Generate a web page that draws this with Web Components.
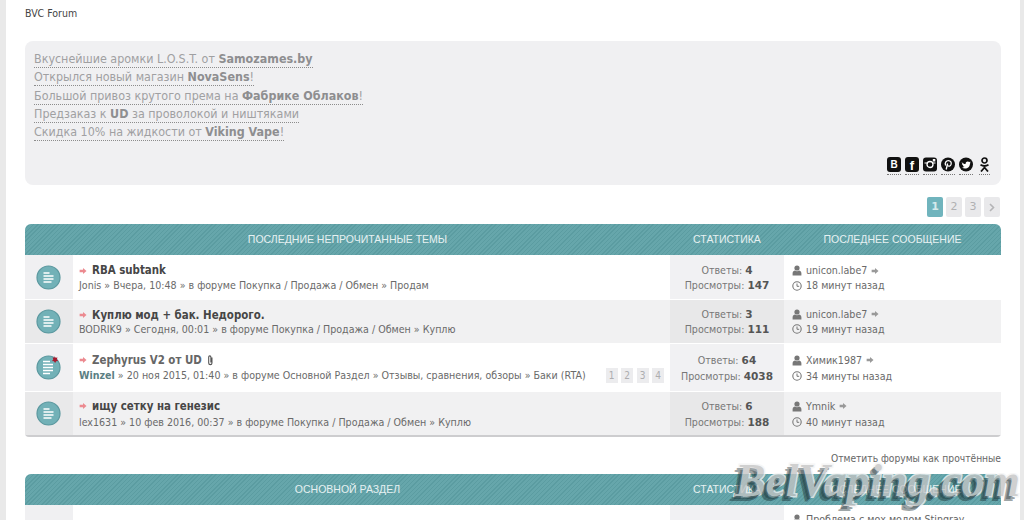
<!DOCTYPE html>
<html lang="ru">
<head>
<meta charset="utf-8">
<title>BVC Forum</title>
<style>
  html, body { margin: 0; height: 520px; overflow: hidden; background: #e9e9e9; }
  body { font-family: "DejaVu Sans Condensed", "DejaVu Sans", sans-serif; }
  .page { position: relative; height: 520px; margin: 0 4px 0 6px; padding: 0 19px; background: #fff; overflow: hidden; }
  b { font-weight: 700; }
</style>
</head>
<body>
<div class="page">
  <forum-crumb>BVC Forum</forum-crumb>
  <news-box>
    <news-line>Вкуснейшие аромки L.O.S.T. от <b>Samozames.by</b></news-line>
    <news-line>Открылся новый магазин <b>NovaSens</b>!</news-line>
    <news-line>Большой привоз крутого према на <b>Фабрике Облаков</b>!</news-line>
    <news-line>Предзаказ к <b>UD</b> за проволокой и ништяками</news-line>
    <news-line>Скидка 10% на жидкости от <b>Viking Vape</b>!</news-line>
    <social-links slot="social"></social-links>
  </news-box>
  <page-nav pages="3" current="1" next></page-nav>

  <forum-section heading="Последние непрочитанные темы" closed>
    <topic-row replies="4" views="147" user="unicon.labe7" ago="18 минут назад" style="--lh:15px;--row:44px;--nudge:2px;--main-pt:2px">
      <span slot="title">RBA subtank</span>
      <span slot="meta">Jonis » Вчера, 10:48 » в форуме Покупка / Продажа / Обмен » Продам</span>
    </topic-row>
    <topic-row alt replies="3" views="111" user="unicon.labe7" ago="19 минут назад" style="--lh:15px;--row:43px;--nudge:0px;--main-pt:1px;--meta-mt:-1px">
      <span slot="title">Куплю мод + бак. Недорого.</span>
      <span slot="meta">BODRIK9 » Сегодня, 00:01 » в форуме Покупка / Продажа / Обмен » Куплю</span>
    </topic-row>
    <topic-row hot clip pages="4" replies="64" views="4038" user="Химик1987" ago="34 минуты назад" style="--lh:16px;--row:47px;--nudge:1px;--main-pt:2px;--main-pb:3px;--meta-mt:-1px;--title:#666">
      <span slot="title">Zephyrus V2 от UD</span>
      <span slot="meta"><b style="color:#5c7f84">Winzel</b> » 20 ноя 2015, 01:40 » в форуме Основной Раздел » Отзывы, сравнения, обзоры » Баки (RTA)</span>
    </topic-row>
    <topic-row alt replies="6" views="188" user="Ymnik" ago="40 минут назад" style="--lh:16px;--row:43px;--nudge:1px;--main-pt:1px">
      <span slot="title">ищу сетку на генезис</span>
      <span slot="meta">lex1631 » 10 фев 2016, 00:37 » в форуме Покупка / Продажа / Обмен » Куплю</span>
    </topic-row>
  </forum-section>

  <mark-read>Отметить форумы как прочтённые</mark-read>

  <forum-section heading="Основной раздел" style="--sect-top:8px">
    <forum-row user="Проблема с мох модом Stingray"></forum-row>
  </forum-section>

  <vape-stamp>BelVaping.com</vape-stamp>
</div>

<script>
const ICONS = {
  arrow: (c, s) => `<svg width="${s}" height="${s}" viewBox="0 0 10 10"><path fill="${c}" d="M5 1.2 9.400 5 5 8.800V6.600H.8V3.400H5z"/></svg>`,
  user: `<svg width="10" height="11" viewBox="0 0 10 11"><circle cx="5" cy="3" r="2.600" fill="#777"/><path fill="#777" d="M.6 10.600V8.200C.6 6.500 2 5.700 3 5.500c.6.5 1.300.7 2 .7s1.400-.2 2-.7c1 .2 2.400 1 2.400 2.700v2.400z"/></svg>`,
  clock: `<svg width="10" height="10" viewBox="0 0 10 10"><circle cx="5" cy="5" r="4.200" fill="none" stroke="#777" stroke-width="1.100"/><path d="M5 2.500V5.300H7.200" fill="none" stroke="#777"/></svg>`,
  clip: `<svg width="8" height="12" viewBox="0 0 7 11"><path d="M5 3v5a1.500 1.500 0 0 1-3 0V2.500a1 1 0 0 1 2 0V7.500" transform="translate(.3 .2)" fill="none" stroke="#555" stroke-width="1"/></svg>`
};

class ForumCrumb extends HTMLElement {
  connectedCallback() {
    this.attachShadow({ mode: 'open' }).innerHTML = `
      <style>
        :host { display: block; height: 41px; padding-top: 6px; box-sizing: border-box; font-size: 10.500px; line-height: 14px; color: #444; }
      </style><slot></slot>`;
  }
}

class NewsBox extends HTMLElement {
  connectedCallback() {
    this.attachShadow({ mode: 'open' }).innerHTML = `
      <style>
        :host { display: flex; flex-direction: column; align-items: flex-start; height: 144px; box-sizing: border-box; padding: 9px 11px 10px 9px; background: #f0f0f2; border-radius: 8px; }
        .social { margin-top: auto; align-self: flex-end; }
      </style>
      <slot></slot>
      <div class="social"><slot name="social"></slot></div>`;
  }
}

class NewsLine extends HTMLElement {
  connectedCallback() {
    this.attachShadow({ mode: 'open' }).innerHTML = `
      <style>
        :host { display: block; font-size: 12.400px; line-height: 17px; height: 17px; margin-bottom: .25px; color: #a0a0a2; border-bottom: 1px dotted #8c8c8c; }
        ::slotted(b) { color: #8e8e90; }
      </style><slot></slot>`;
  }
}

class SocialLinks extends HTMLElement {
  connectedCallback() {
    const box = (inner) => `<a class="ic">${inner}</a>`;
    this.attachShadow({ mode: 'open' }).innerHTML = `
      <style>
        :host { display: flex; gap: 4px; }
        .ic { display: block; width: 14px; height: 17px; border-bottom: 1px dotted #777; }
        .ic svg { display: block; }
        .sq { width: 14px; height: 15px; background: #111; border-radius: 3px; color: #fff; font: 700 10px/15px "Liberation Sans", sans-serif; text-align: center; }
        .f { font-size: 13px; line-height: 17px; }
      </style>
      ${box(`<div class="sq">В</div>`)}
      ${box(`<div class="sq f">f</div>`)}
      ${box(`<svg width="14" height="15" viewBox="0 0 14 15"><rect y=".5" width="14" height="14" rx="3" fill="#111"/><path d="M1.500 6h11" stroke="#fff" stroke-width="1"/><circle cx="7" cy="7.500" r="3" fill="#111" stroke="#fff" stroke-width="1.300"/><rect x="9.800" y="2" width="2.500" height="2.500" fill="#fff"/></svg>`)}
      ${box(`<svg width="14" height="15" viewBox="0 0 14 15"><circle cx="7" cy="7.500" r="7" fill="#111"/><path d="M5.200 12.500 6.600 6.500M4.600 8.500C3.500 6 5 3.700 7.400 3.700c2.400 0 3.300 2 2.600 3.900-.6 1.700-2.400 2-3.200 1" fill="none" stroke="#fff" stroke-width="1.300"/></svg>`)}
      ${box(`<svg width="14" height="15" viewBox="0 0 14 15"><circle cx="7" cy="7.500" r="7" fill="#111"/><path fill="#fff" d="M2.500 5c1.200 1.300 2.600 2 4.100 2.100C6.400 5.500 7.400 4.400 8.700 4.400c.7 0 1.200.3 1.600.7l1.200-.5-.7 1.100 1-.2-.8.9c0 3-2.200 5.100-5 5.100-1.100 0-2.100-.3-3-.9 1 .1 1.900-.2 2.600-.8-.9 0-1.500-.6-1.800-1.300h.8C3.600 8.200 3 7.400 3 6.400l.8.200C3 6 2.800 5.800 2.500 5z"/></svg>`)}
      <a class="ic" style="width:11px;margin-left:2px"><svg width="11" height="15" viewBox="0 0 11 15"><circle cx="5.500" cy="3.500" r="2.500" fill="none" stroke="#111" stroke-width="1.700"/><path d="M1.500 7.800c2.500 1.500 5.500 1.500 8 0M5.500 9v1.500M2 14.500l3.500-4 3.500 4" fill="none" stroke="#111" stroke-width="1.800"/></svg></a>`;
  }
}

class PageNav extends HTMLElement {
  connectedCallback() {
    const n = +this.getAttribute('pages');
    const cur = +this.getAttribute('current');
    let items = '';
    for (let i = 1; i <= n; i++) items += `<a class="${i === cur ? 'on' : ''}">${i}</a>`;
    if (this.hasAttribute('next')) items += `<a class="nx"><svg width="6" height="9" viewBox="0 0 6 9"><path d="M1 1l3.500 3.500L1 8" fill="none" stroke="#b4b4b6" stroke-width="1.600"/></svg></a>`;
    this.attachShadow({ mode: 'open' }).innerHTML = `
      <style>
        :host { display: flex; justify-content: flex-end; gap: 3px; margin: 12px 1px 7px 0; height: 20px; font: 11px/20px "DejaVu Sans", sans-serif; }
        a { display: flex; align-items: center; justify-content: center; width: 16px; height: 20px; background: #e9e9eb; color: #b0b0b2; border-radius: 2px; }
        a.on { background: #70b4bd; color: #d5eaec; font-weight: 700; }
      </style>${items}`;
  }
}

class ForumSection extends HTMLElement {
  connectedCallback() {
    this.attachShadow({ mode: 'open' }).innerHTML = `
      <style>
        :host { display: block; margin-top: var(--sect-top, 0); }
        .head {
          display: grid; grid-template-columns: 1fr 114px 217px; height: 31px; align-items: center;
          border-radius: 6px 6px 0 0; color: #e6f1f2; text-align: center; text-transform: uppercase;
          font: 10.500px/31px "Liberation Sans", sans-serif;
          background: repeating-linear-gradient(135deg, #5b9ca1 0 1px, #66a6ab 1px 3px);
        }
        .rows { display: flex; flex-direction: column; gap: 1px; }
        :host([closed]) .rows { border-bottom: 2px solid #cdcdcf; border-radius: 0 0 4px 4px; }
      </style>
      <div class="head"><span>${this.getAttribute('heading')}</span><span>Статистика</span><span>Последнее сообщение</span></div>
      <div class="rows"><slot></slot></div>`;
  }
}

class TopicRow extends HTMLElement {
  connectedCallback() {
    const hot = this.hasAttribute('hot');
    const clip = this.hasAttribute('clip') ? `<span class="clip">${ICONS.clip}</span>` : '';
    let mini = '';
    const pages = +this.getAttribute('pages') || 0;
    if (pages) {
      mini = '<div class="mini">';
      for (let i = 1; i <= pages; i++) mini += `<a>${i}</a>`;
      mini += '</div>';
    }
    this.attachShadow({ mode: 'open' }).innerHTML = `
      <style>
        :host {
          display: grid; grid-template-columns: 48px 1fr 114px 217px; height: var(--row, 44px);
          font-size: 10.600px; line-height: var(--lh, 15px); color: #6a6a6a; background: #fff;
        }
        :host([alt]) { background: #f1f1f2; }
        .icon { display: flex; align-items: center; justify-content: center; padding-right: 1px; background: #f0f0f2; }
        :host([alt]) .icon { background: #e9e9ea; }
        .main { display: flex; align-items: center; justify-content: space-between; padding: var(--main-pt, 2px) 6px var(--main-pb, 0); min-width: 0; }
        .title { display: flex; align-items: center; gap: 5px; font-size: 11.400px; font-weight: 700; color: var(--title, #464646); }
        .clip { display: inline-flex; margin-left: -1px; }
        .meta { white-space: nowrap; margin-top: var(--meta-mt, 0); }
        .mini { display: flex; gap: 3.500px; align-self: flex-end; margin-bottom: 5px; }
        .mini a { width: 12px; height: 15px; text-align: center; background: #ececee; color: #adadaf; font-size: 10px; line-height: 15px; }
        .stats { display: flex; flex-direction: column; justify-content: center; align-items: center; padding-top: var(--nudge, 0); background: #f1f1f3; color: #777; }
        :host([alt]) .stats { background: #e8e8e9; }
        .stats b { color: #555; font-family: "DejaVu Sans", sans-serif; font-size: 10.500px; }
        .last { display: flex; flex-direction: column; justify-content: center; padding: var(--nudge, 0) 0 0 8px; }
        .ln { display: flex; align-items: center; gap: 4px; }
        .ln svg { display: block; }
      </style>
      <div class="icon"><topic-icon ${hot ? 'hot' : ''}></topic-icon></div>
      <div class="main">
        <div>
          <div class="title">${ICONS.arrow('#ec8a90', 8)}<slot name="title"></slot>${clip}</div>
          <div class="meta"><slot name="meta"></slot></div>
        </div>
        ${mini}
      </div>
      <div class="stats">
        <div>Ответы: <b>${this.getAttribute('replies')}</b></div>
        <div>Просмотры: <b>${this.getAttribute('views')}</b></div>
      </div>
      <div class="last">
        <div class="ln">${ICONS.user}<span>${this.getAttribute('user')}</span>${ICONS.arrow('#999', 8)}</div>
        <div class="ln">${ICONS.clock}<span>${this.getAttribute('ago')}</span></div>
      </div>`;
  }
}

class TopicIcon extends HTMLElement {
  connectedCallback() {
    const dot = this.hasAttribute('hot')
      ? `<path fill="#a8182c" d="M18.500 1l1 1.800 2-.2-.7 1.900 1.300 1.500-2 .3-1 1.700-1.100-1.700-2-.3 1.300-1.500-.7-1.900 2 .2z"/>`
      : '';
    const lines = this.hasAttribute('hot')
      ? `<path d="M7 6.500h7M7 9.500h10M7 12.500h10M7 15.500h10M7 18.500h7" stroke="#fff" stroke-width="1.600"/>`
      : `<path d="M7.500 8h6M7.500 11h10M7.500 14h10M7.500 17h8" stroke="#fff" stroke-width="1.700"/>`;
    this.attachShadow({ mode: 'open' }).innerHTML = `
      <style>:host { display: block; width: 25px; height: 25px; } svg { display: block; }</style>
      <svg width="25" height="25" viewBox="0 0 25 25">
        <circle cx="12.500" cy="12.500" r="11.500" fill="#72b1b7" stroke="#5b989f" stroke-width="1.200"/>
        ${lines}${dot}
      </svg>`;
  }
}

class ForumRow extends HTMLElement {
  connectedCallback() {
    this.attachShadow({ mode: 'open' }).innerHTML = `
      <style>
        :host { display: grid; grid-template-columns: 48px 1fr 114px 217px; height: 60px; font-size: 10.600px; line-height: 15px; color: #666; background: #fff; }
        .icon { background: #f0f0f2; }
        .stats { background: #f1f1f3; }
        .last { display: flex; align-items: flex-start; gap: 4px; padding: 7px 0 0 8px; }
        .last svg { display: block; margin-top: 2px; }
      </style>
      <div class="icon"></div><div></div><div class="stats"></div>
      <div class="last">${ICONS.user}<span>${this.getAttribute('user')}</span></div>`;
  }
}

class MarkRead extends HTMLElement {
  connectedCallback() {
    this.attachShadow({ mode: 'open' }).innerHTML = `
      <style>
        :host { display: block; text-align: right; margin-top: 15px; font-size: 10.200px; line-height: 14px; color: #666; }
      </style><slot></slot>`;
  }
}

class VapeStamp extends HTMLElement {
  connectedCallback() {
    this.attachShadow({ mode: 'open' }).innerHTML = `
      <style>
        :host {
          position: absolute; left: 729px; top: 451px; white-space: nowrap; opacity: .78;
          font: italic 700 46px/60px "Liberation Serif", serif; letter-spacing: -.2px;
          color: #c4c4c4; -webkit-text-stroke: 3px #f4f4f4; paint-order: stroke fill;
          text-shadow: -3px 3px 0 rgba(20,40,45,.55), -5px 5px 0 rgba(20,40,45,.55);
        }
      </style><slot></slot>`;
  }
}

customElements.define('forum-crumb', ForumCrumb);
customElements.define('news-box', NewsBox);
customElements.define('news-line', NewsLine);
customElements.define('social-links', SocialLinks);
customElements.define('page-nav', PageNav);
customElements.define('forum-section', ForumSection);
customElements.define('topic-icon', TopicIcon);
customElements.define('topic-row', TopicRow);
customElements.define('forum-row', ForumRow);
customElements.define('mark-read', MarkRead);
customElements.define('vape-stamp', VapeStamp);
</script>
</body>
</html>
